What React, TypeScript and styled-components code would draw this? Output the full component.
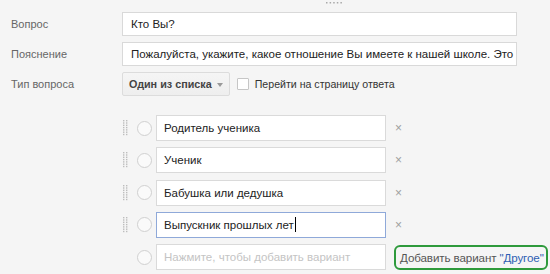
import styled, { createGlobalStyle } from 'styled-components';

const GlobalStyle = createGlobalStyle`
  html, body {
    margin: 0;
    padding: 0;
    background: #f5f5f5;
    font-family: "Liberation Sans", Arial, sans-serif;
    font-size: 11.5px;
    color: #333;
  }
`;

const options = ['Родитель ученика', 'Ученик', 'Бабушка или дедушка', 'Выпускник прошлых лет'];

const Handle = () => (
  <svg width="5" height="16" viewBox="0 0 5 16">
    {[0, 1, 2, 3, 4, 5, 6].map((r) =>
      [0, 1].map((c) => <rect key={`${r}-${c}`} x={c * 3} y={r * 2.3} width="1.4" height="1.4" fill="#bdbdbd" />)
    )}
  </svg>
);

const App = () => {
  return (
    <>
      <GlobalStyle />
      <Page>
        <Grip>
          <svg width="18" height="3" viewBox="0 0 18 3">
            {[0, 1, 2, 3, 4].map((i) => (
              <rect key={i} x={i * 3.6} y="0" width="1.5" height="1.5" fill="#aaa" />
            ))}
          </svg>
        </Grip>
        <Form>
          <Label>Вопрос</Label>
          <Field>Кто Вы?</Field>
          <Label>Пояснение</Label>
          <Field>Пожалуйста, укажите, какое отношение Вы имеете к нашей школе. Это поможет нам</Field>
          <Label>Тип вопроса</Label>
          <TypeRow>
            <Select>
              Один из списка <Arrow />
            </Select>
            <Check />
            <CheckLabel>Перейти на страницу ответа</CheckLabel>
          </TypeRow>
        </Form>
        <Options>
          {options.map((o, i) => (
            <OptionRow key={o}>
              <HandleBox>
                <Handle />
              </HandleBox>
              <Radio />
              <OptionField $focused={i === options.length - 1}>
                {o}
                {i === options.length - 1 && <Caret />}
              </OptionField>
              <Remove>×</Remove>
            </OptionRow>
          ))}
          <OptionRow>
            <HandleBox />
            <Radio />
            <OptionField $placeholder>Нажмите, чтобы добавить вариант</OptionField>
            <AddOther>
              Добавить вариант <OtherLink>"Другое"</OtherLink>
            </AddOther>
          </OptionRow>
        </Options>
      </Page>
    </>
  );
};

export default App;

const Page = styled.div`
  width: 550px;
  height: 274px;
  overflow: hidden;
  position: relative;
`;

const Grip = styled.div`
  position: absolute;
  top: 1px;
  left: 326px;
  line-height: 0;
`;

const Form = styled.div`
  display: grid;
  grid-template-columns: 111px 395px;
  row-gap: 6px;
  padding: 12px 0 0 11px;
  align-items: center;
`;

const Label = styled.div`
  color: #666;
  font-size: 11px;
`;

const Field = styled.div`
  height: 22px;
  line-height: 22px;
  border: 1px solid #d9d9d9;
  background: #fff;
  padding: 0 2px 0 8px;
  white-space: nowrap;
  overflow: hidden;
  color: #222;
`;

const TypeRow = styled.div`
  display: flex;
  align-items: center;
`;

const Select = styled.div`
  height: 24px;
  box-sizing: border-box;
  display: flex;
  align-items: center;
  gap: 5px;
  padding: 0 6px 0 6px;
  white-space: nowrap;
  border: 1px solid #dcdcdc;
  border-radius: 2px;
  background: linear-gradient(#f5f5f5, #eeeeee);
  font-weight: bold;
  color: #444;
  font-size: 10.8px;
`;

const Arrow = styled.span`
  width: 0;
  height: 0;
  border-left: 3.5px solid transparent;
  border-right: 3.5px solid transparent;
  border-top: 4px solid #999;
  margin-top: 1px;
`;

const Check = styled.span`
  width: 10px;
  height: 10px;
  border: 1px solid #c6c6c6;
  background: #fff;
  border-radius: 1px;
  margin-left: 7px;
`;

const CheckLabel = styled.span`
  margin-left: 6px;
  color: #333;
  font-size: 10.6px;
`;

const Options = styled.div`
  display: flex;
  flex-direction: column;
  gap: 6.3px;
  padding: 19px 0 0 122px;
`;

const OptionRow = styled.div`
  display: flex;
  align-items: center;
  height: 26px;
`;

const HandleBox = styled.div`
  width: 14px;
  padding-left: 1px;
  line-height: 0;
`;

const Radio = styled.span`
  width: 13px;
  height: 13px;
  border-radius: 50%;
  border: 1px solid #d0d0d0;
  background: #fafafa;
`;

const OptionField = styled.div<{ $focused?: boolean; $placeholder?: boolean }>`
  margin-left: 4px;
  width: 214px;
  height: 24px;
  line-height: 24px;
  padding: 0 7px;
  background: #fff;
  border: 1px solid ${(p) => (p.$focused ? '#8fa9d9' : '#dadada')};
  color: ${(p) => (p.$placeholder ? '#c4c4c4' : '#222')};
  white-space: nowrap;
  overflow: hidden;
  display: flex;
  align-items: center;
`;

const Caret = styled.span`
  width: 1px;
  height: 15px;
  background: #000;
  margin-left: 1px;
`;

const Remove = styled.span`
  margin-left: 9px;
  color: #a0a0a0;
  font-size: 12px;
`;

const AddOther = styled.div`
  margin-left: 8px;
  margin-top: 1px;
  height: 21px;
  border: 2.5px solid #2e9a3c;
  border-radius: 6px;
  display: flex;
  align-items: center;
  padding: 0 2px 0 4px;
  white-space: nowrap;
  color: #555;
  font-size: 11.6px;
  letter-spacing: -0.1px;
`;

const OtherLink = styled.span`
  color: #2f5fb3;
  margin-left: 3px;
`;
